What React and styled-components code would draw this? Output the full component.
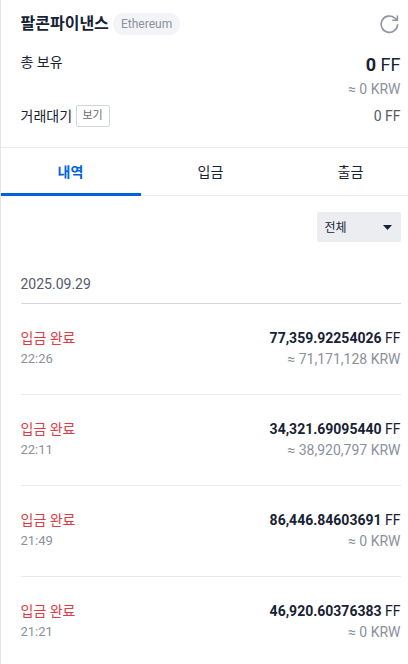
import React from "react";
import styled, { createGlobalStyle } from "styled-components";

const GlobalStyle = createGlobalStyle`
  *, *::before, *::after { box-sizing: border-box; }
  body {
    margin: 0;
    overflow: hidden;
    background: #fff;
    font-family: Roboto, "Noto Sans CJK KR", sans-serif;
    color: #172234;
  }
  button { font: inherit; padding: 0; background: none; border: 0; }
  ul, h1, h2, p { margin: 0; padding: 0; font-weight: 400; list-style: none; }
`;

const Panel = styled.main`
  width: 421px;
  height: 664px;
  overflow: hidden;
  border-left: 1px solid #e3e3f1;
`;

const Summary = styled.section`
  height: 147px;
  padding: 12px 19.5px 0;
`;

const Content = styled.div`
  width: 380px;
`;

const TitleBar = styled.div`
  display: flex;
  align-items: center;
  height: 24px;
`;

const CoinName = styled.h1`
  font-size: 16px;
  font-weight: 700;
  line-height: 24px;
  height: 24px;
  width: 92.5px;
  white-space: nowrap;
`;

const NetworkPill = styled.span`
  height: 22px;
  padding: 0 8px;
  border-radius: 11px;
  background: #f3f4f7;
  color: #8b909b;
  font-size: 12px;
  line-height: 22px;
`;

const RefreshButton = styled.button`
  display: flex;
  margin-left: auto;
  margin-right: 1px;
`;

const BalanceRow = styled.div`
  display: flex;
  justify-content: space-between;
  align-items: ${(p) => (p.$center ? "center" : "flex-start")};
  height: ${(p) => p.$height}px;
  margin-top: ${(p) => p.$gap}px;
`;

const Label = styled.span`
  display: flex;
  align-items: center;
  gap: 3.5px;
  height: 22px;
  font-size: 14px;
  line-height: 22px;
`;

const ViewButton = styled.button`
  width: 34px;
  height: 22px;
  border: 1px solid #d5d6dc;
  border-radius: 2px;
  color: #666b75;
  font-size: 11px;
  line-height: 20px;
`;

const Amounts = styled.div`
  text-align: right;
`;

const Total = styled.p`
  font-size: 18px;
  line-height: 28px;
`;

const Pending = styled.span`
  font-size: 14px;
  line-height: 22px;
  color: #545b69;
`;

const Converted = styled.p`
  font-size: 14px;
  line-height: ${(p) => p.$line || 21}px;
  color: #8b909b;
`;

const Tabs = styled.nav`
  display: grid;
  grid-template-columns: repeat(3, 140px);
  height: 49px;
  border-top: 1px solid #e9eaee;
  border-bottom: 1px solid #e9eaee;
`;

const Tab = styled.button`
  height: 48px;
  padding: ${(p) => (p.$active ? "1px 1px 0 0" : "0 1px 2px 0")};
  border-bottom: ${(p) => (p.$active ? "3px solid #0062df" : "0")};
  color: ${(p) => (p.$active ? "#0062df" : "#172234")};
  font-size: 14px;
  font-weight: ${(p) => (p.$active ? 700 : 400)};
`;

const History = styled.section`
  width: 420px;
  padding: 16px 19.5px 0;
`;

const FilterButton = styled.button`
  display: flex;
  align-items: center;
  justify-content: space-between;
  width: 84px;
  height: 30px;
  margin-left: 296.5px;
  padding: 0 9.5px 2px 7.5px;
  border-radius: 2px;
  background: #ecedf1;
  color: #172234;
  font-size: 12px;

  svg { margin-top: 2px; }
`;

const DateHeading = styled.h2`
  width: 380px;
  height: 32px;
  margin-top: 30px;
  border-bottom: 1px solid #d5d7dc;
  color: #545b69;
  font-size: 14px;
  line-height: 24px;
`;

const Entries = styled.ul`
  width: 380px;
`;

const Entry = styled.li`
  display: flex;
  justify-content: space-between;
  height: 91px;
  padding-top: 24px;
  border-bottom: 1px solid #e9eaee;
  font-size: 14px;
  line-height: 21px;
`;

const Status = styled.p`
  color: #dd3c44;
`;

const Time = styled.p`
  color: #8b909b;
  font-size: 13px;
  line-height: 19px;
`;

const entries = [
  { time: "22:26", amount: "77,359.92254026", krw: "71,171,128" },
  { time: "22:11", amount: "34,321.69095440", krw: "38,920,797" },
  { time: "21:49", amount: "86,446.84603691", krw: "0" },
  { time: "21:21", amount: "46,920.60376383", krw: "0" },
];

function RefreshIcon() {
  return (
    <svg width="20" height="20" viewBox="0 0 20 20" fill="none" stroke="#8e939c" strokeWidth="1.6">
      <path d="M17.6 10.2A8.2 8.2 0 1 1 14.8 4l2.2 2" />
      <path d="M17.4 1.5v4.7h-5" />
    </svg>
  );
}

export default function App() {
  return (
    <>
      <GlobalStyle />
      <Panel>
        <Summary>
          <Content>
            <TitleBar>
              <CoinName>팔콘파이낸스</CoinName>
              <NetworkPill>Ethereum</NetworkPill>
              <RefreshButton aria-label="새로고침"><RefreshIcon /></RefreshButton>
            </TitleBar>
            <BalanceRow $height={50} $gap={15}>
              <Label>총 보유</Label>
              <Amounts>
                <Total><b>0</b> FF</Total>
                <Converted $line={20}>≈ 0 KRW</Converted>
              </Amounts>
            </BalanceRow>
            <BalanceRow $center $height={22} $gap={4}>
              <Label>거래대기<ViewButton>보기</ViewButton></Label>
              <Pending>0 FF</Pending>
            </BalanceRow>
          </Content>
        </Summary>
        <Tabs>
          <Tab $active>내역</Tab>
          <Tab>입금</Tab>
          <Tab>출금</Tab>
        </Tabs>
        <History>
          <FilterButton>
            전체
            <svg width="9" height="5" viewBox="0 0 9 5"><path d="M0 0h9L4.5 5z" fill="#172234" /></svg>
          </FilterButton>
          <DateHeading>2025.09.29</DateHeading>
          <Entries>
            {entries.map((entry) => (
              <Entry key={entry.time}>
                <div>
                  <Status>입금 완료</Status>
                  <Time>{entry.time}</Time>
                </div>
                <Amounts>
                  <p><b>{entry.amount}</b> FF</p>
                  <Converted>≈ {entry.krw} KRW</Converted>
                </Amounts>
              </Entry>
            ))}
          </Entries>
        </History>
      </Panel>
    </>
  );
}
